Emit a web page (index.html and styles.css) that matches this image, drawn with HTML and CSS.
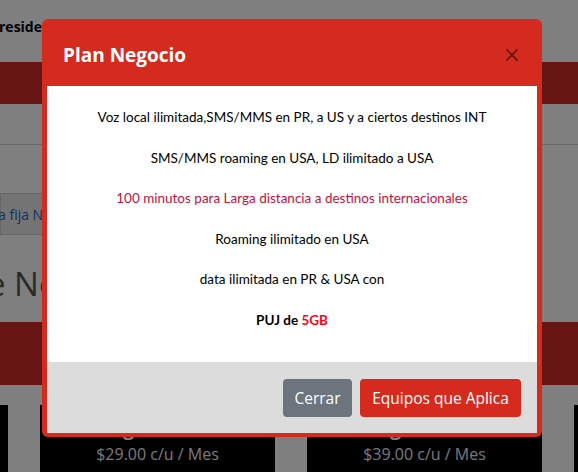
FILE: index.html
```html
<!DOCTYPE html>
<html lang="es">
<head>
<meta charset="utf-8">
<title>Plan Negocio</title>
<link rel="stylesheet" href="styles.css">
</head>
<body>
<div class="page">
  <div class="topline"><span class="brand">residencial</span></div>
  <div class="redbar"></div>
  <div class="subnav"></div>
  <div class="inputrow"><span class="inputlabel">a fija Negocio</span></div>
  <h1 class="heading">e Negocios</h1>
  <div class="redband"></div>
  <div class="cards">
    <div class="card edge"></div>
    <div class="card"><div class="cname">Negocio 3GB</div><div class="price">$29.00 c/u / Mes</div></div>
    <div class="card"><div class="cname">Negocio 5GB</div><div class="price">$39.00 c/u / Mes</div></div>
    <div class="card edge"></div>
  </div>
</div>
<div class="backdrop"></div>
<div class="modal">
  <div class="mheader">
    <h5 class="mtitle">Plan Negocio</h5>
    <button class="close" aria-label="Close"><svg width="12" height="12" viewBox="0 0 12 12"><path d="M1 1 L11 11 M11 1 L1 11" stroke="currentColor" stroke-width="1.8" stroke-linecap="round"/></svg></button>
  </div>
  <div class="mbody">
    <p>Voz local ilimitada,SMS/MMS en PR, a US y a ciertos destinos INT</p>
    <p>SMS/MMS roaming en USA, LD ilimitado a USA</p>
    <p class="crimson">100 minutos para Larga distancia a destinos internacionales</p>
    <p>Roaming ilimitado en USA</p>
    <p>data ilimitada en PR &amp; USA con</p>
    <p class="strong">PUJ de <span class="red">5GB</span></p>
  </div>
  <div class="mfooter">
    <button class="btn btn-gray">Cerrar</button>
    <button class="btn btn-red">Equipos que Aplica</button>
  </div>
</div>
</body>
</html>
```

FILE: styles.css
```css
* { box-sizing: border-box; }
html, body { margin: 0; padding: 0; }
body {
  width: 578px;
  height: 472px;
  overflow: hidden;
  background: #fff;
  font-family: "Open Sans", "Noto Sans", sans-serif;
}
.page { position: relative; width: 578px; overflow: hidden; }
.topline { height: 62px; padding-top: 16px; }
.brand {
  display: block;
  margin-left: -1px;
  font-family: "Open Sans", sans-serif;
  font-weight: 700;
  font-size: 14px;
  line-height: 22px;
  color: #000;
  white-space: nowrap;
}
.redbar { height: 42px; background: #cc2a26; }
.subnav { height: 41px; border-bottom: 1px solid #d6d6d6; }
.inputrow {
  margin-top: 48px;
  height: 42px;
  width: 300px;
  background: #e9e9e9;
  border: 1px solid #cfcfcf;
  display: flex;
  align-items: center;
}
.inputlabel {
  margin-left: -3px;
  font-size: 14px;
  color: #2a62c8;
  white-space: nowrap;
}
.heading {
  margin: 0;
  height: 87px;
  padding-top: 26px;
  margin-left: -13px;
  font-family: "Open Sans", sans-serif;
  font-weight: 400;
  font-size: 33px;
  line-height: 46px;
  color: #555;
  white-space: nowrap;
}
.redband { height: 63px; background: #cc2a26; }
.cards {
  margin-top: 20px;
  margin-left: -227px;
  display: flex;
  gap: 32px;
}
.card {
  flex: 0 0 235px;
  height: 80px;
  background: #000;
  text-align: center;
  color: #fff;
}
.cname { font-size: 20px; font-weight: 700; line-height: 26px; padding-top: 10px; margin-bottom: 2px; }
.price { font-size: 16px; line-height: 22px; color: #f2ecff; }

.backdrop {
  position: fixed;
  inset: 0;
  background: rgba(0, 0, 0, 0.5);
}
.modal {
  position: fixed;
  top: 19px;
  left: 42px;
  width: 500px;
  height: 418px;
  background: #d52b1e;
  border-radius: 6px;
  padding: 0 5px 4px 5px;
  display: flex;
  flex-direction: column;
}
.mheader {
  height: 67px;
  padding: 6px 16px 0 16px;
  display: flex;
  align-items: center;
  justify-content: space-between;
}
.mtitle {
  margin: 0;
  font-family: "Open Sans", sans-serif;
  font-weight: 700;
  font-size: 19px;
  line-height: 27px;
  color: #fff;
}
.close {
  background: none;
  border: 0;
  padding: 0;
  margin-right: 3px;
  margin-top: -1px;
  color: rgba(0, 0, 0, 0.5);
  display: flex;
}
.mbody {
  background: #fff;
  height: 276px;
  padding-top: 21px;
  text-align: center;
  font-family: "Lato", sans-serif;
  font-size: 13.5px;
  color: #000;
}
.mbody p {
  margin: 0;
  height: 40.5px;
  line-height: 20px;
}
.crimson { color: #c2123e; }
.strong { font-weight: 700; }
.red { color: #ff0016; }
.mfooter {
  background: #dcdcdc;
  height: 71px;
  padding: 0 16px;
  display: flex;
  align-items: center;
  justify-content: flex-end;
  gap: 8px;
}
.btn {
  height: 38px;
  border: 0;
  border-radius: 4px;
  font-family: "Open Sans", sans-serif;
  font-size: 15.5px;
  color: #fff;
  padding: 0;
}
.btn-gray { background: #6c757d; width: 69px; }
.btn-red { background: #d52b1e; width: 161px; }
```
